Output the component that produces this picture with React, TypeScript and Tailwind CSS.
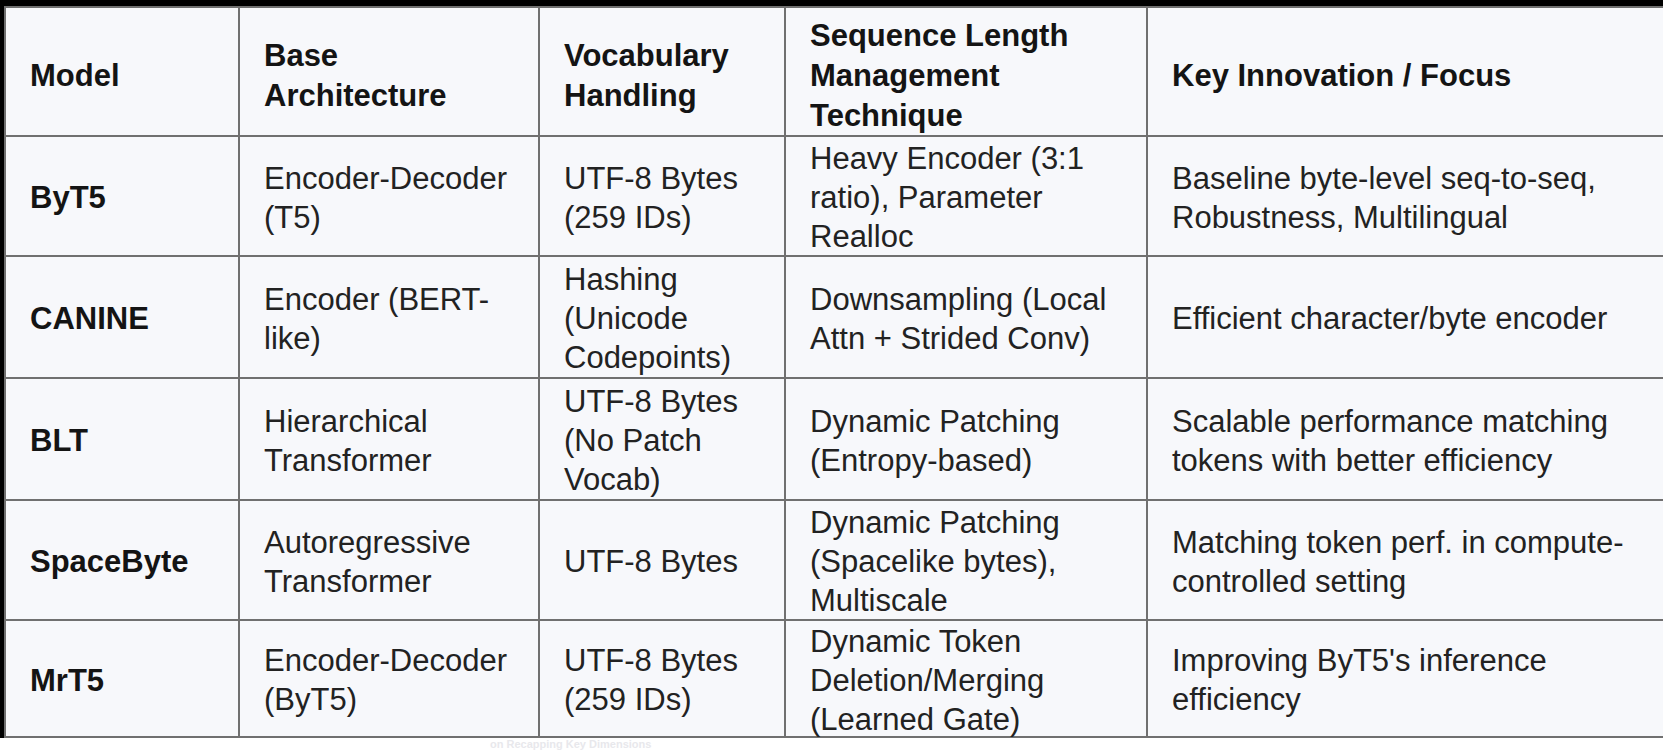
const header = [
  ["Model"],
  ["Base", "Architecture"],
  ["Vocabulary", "Handling"],
  ["Sequence Length", "Management", "Technique"],
  ["Key Innovation / Focus"],
];

const rows = [
  {
    model: "ByT5",
    arch: ["Encoder-Decoder", "(T5)"],
    vocab: ["UTF-8 Bytes", "(259 IDs)"],
    seq: ["Heavy Encoder (3:1", "ratio), Parameter", "Realloc"],
    focus: ["Baseline byte-level seq-to-seq,", "Robustness, Multilingual"],
  },
  {
    model: "CANINE",
    arch: ["Encoder (BERT-", "like)"],
    vocab: ["Hashing", "(Unicode", "Codepoints)"],
    seq: ["Downsampling (Local", "Attn + Strided Conv)"],
    focus: ["Efficient character/byte encoder"],
  },
  {
    model: "BLT",
    arch: ["Hierarchical", "Transformer"],
    vocab: ["UTF-8 Bytes", "(No Patch", "Vocab)"],
    seq: ["Dynamic Patching", "(Entropy-based)"],
    focus: ["Scalable performance matching", "tokens with better efficiency"],
  },
  {
    model: "SpaceByte",
    arch: ["Autoregressive", "Transformer"],
    vocab: ["UTF-8 Bytes"],
    seq: ["Dynamic Patching", "(Spacelike bytes),", "Multiscale"],
    focus: ["Matching token perf. in compute-", "controlled setting"],
  },
  {
    model: "MrT5",
    arch: ["Encoder-Decoder", "(ByT5)"],
    vocab: ["UTF-8 Bytes", "(259 IDs)"],
    seq: ["Dynamic Token", "Deletion/Merging", "(Learned Gate)"],
    focus: ["Improving ByT5's inference", "efficiency"],
  },
];

const Cell = ({ lines, bold }: { lines: string[]; bold?: boolean }) => (
  <div className="flex items-center bg-[#f7f8fb] px-[24px] pt-[3px]">
    <div
      className={`whitespace-nowrap text-[31px] leading-[39px] ${
        bold ? "font-bold text-[#141414]" : "text-[#222222]"
      }`}>
      {lines.map((l, i) => (
        <div key={i}>{l}</div>
      ))}
    </div>
  </div>
);

export default function App() {
  return (
    <div
      className="relative h-[750px] w-[1669px] overflow-hidden bg-white"
      style={{ fontFamily: '"Liberation Sans", Arial, sans-serif' }}>
      <div className="w-[1663px] border-l-[4px] border-t-[6px] border-black">
        <div className="grid grid-cols-[232px_298px_244px_360px_515px] grid-rows-[127px_118px_120px_120px_118px_115px] gap-[2px] bg-[#707070] p-[2px]">
          {header.map((h, i) => (
            <div key={i} className="flex items-center bg-[#f7f8fb] px-[24px] pt-[8px]">
              <div className="whitespace-nowrap text-[31px] font-bold leading-[40px] text-[#141414]">
                {h.map((l, j) => (
                  <div key={j}>{l}</div>
                ))}
              </div>
            </div>
          ))}
          {rows.map((r) => (
            <>
              <Cell key={r.model + "m"} lines={[r.model]} bold />
              <Cell key={r.model + "a"} lines={r.arch} />
              <Cell key={r.model + "v"} lines={r.vocab} />
              <Cell key={r.model + "s"} lines={r.seq} />
              <Cell key={r.model + "f"} lines={r.focus} />
            </>
          ))}
        </div>
      </div>
      <div className="absolute left-[490px] top-[738px] whitespace-nowrap text-[11px] font-bold leading-[12px] text-[#e8e8ec]">
        on Recapping Key Dimensions
      </div>
    </div>
  );
}
